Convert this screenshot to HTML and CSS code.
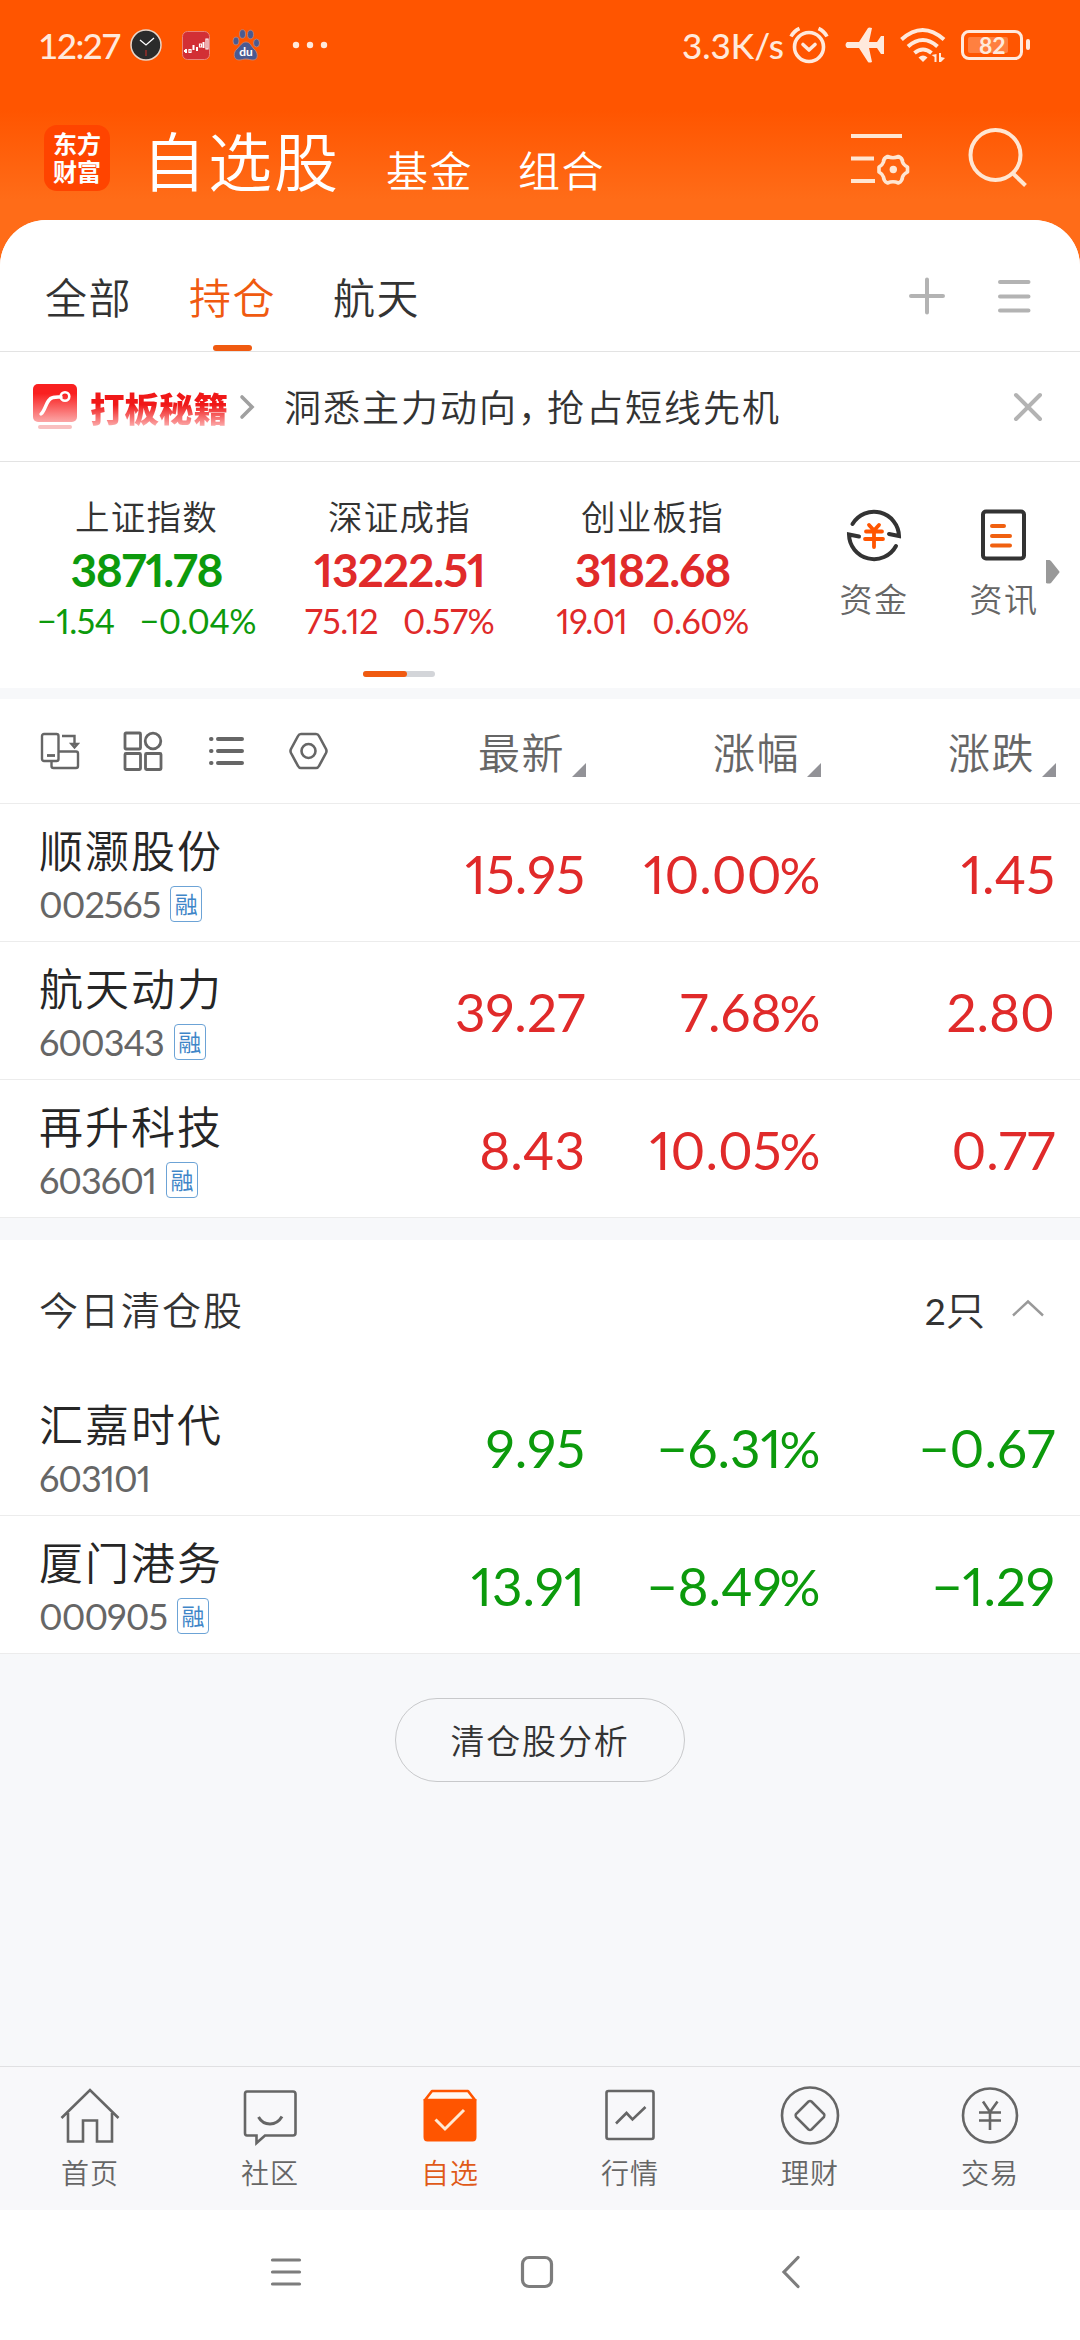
FILE: index.html
```html
<!DOCTYPE html>
<html lang="zh-CN">
<head>
    <meta charset="UTF-8">
    <meta name="viewport" content="width=device-width, initial-scale=1.0">
    <title>自选股</title>
    <link rel="stylesheet" href="styles.css">
</head>
<body>
    <header class="top">
        <div class="status-bar">
            <span class="clock">12:27</span>
            <svg class="st-watch" width="32" height="32" viewBox="0 0 32 32">
                <circle cx="16" cy="16" r="15" fill="#2b2b2b" stroke="#e8d5c8" stroke-width="1.5"/>
                <path d="M10 11l6 5 8-7" fill="none" stroke="#fff" stroke-width="1.3"/>
                <path d="M16 21v6" stroke="#b5302a" stroke-width="1.2"/>
            </svg>
            <svg class="st-stock" width="28" height="29" viewBox="0 0 28 29">
                <rect x=".5" y=".5" width="27" height="28" rx="5" fill="#d22f35" stroke="#e8837a"/>
                <path d="M2 20h3M4 18v4M11.500 14v5M15 16v4M21.500 11v6" stroke="#fff" stroke-width="2"/>
                <path d="M7 18.500h2v3H7zM17.500 13h2v3h-2zM24 8h2v10h-2z" fill="none" stroke="#fff" stroke-width="1.2"/>
            </svg>
            <svg class="st-paw" width="28" height="32" viewBox="0 0 28 32">
                <g fill="#4a5a92" stroke="#c08a80" stroke-width=".8">
                    <ellipse cx="4" cy="12" rx="3" ry="4"/>
                    <ellipse cx="10.500" cy="5" rx="3" ry="4.300"/>
                    <ellipse cx="18.500" cy="5.500" rx="3" ry="4.300"/>
                    <ellipse cx="24.500" cy="14" rx="3" ry="4"/>
                    <path d="M14 13c4 0 5 4 8 7 4 3 5 11-1 11-3 0-4-1-7-1s-4 1-7 1c-6 0-6-8-2-11 3-3 5-7 9-7z"/>
                </g>
                <text class="paw-text" x="14" y="27">du</text>
            </svg>
            <svg class="st-dots" width="36" height="8" viewBox="0 0 36 8" fill="#ffe9dc">
                <circle cx="4" cy="4" r="3.200"/><circle cx="18" cy="4" r="3.200"/><circle cx="32" cy="4" r="3.200"/>
            </svg>
            <span class="speed">3.3K/s</span>
            <svg class="st-alarm" width="40" height="38" viewBox="0 0 40 38" fill="none" stroke="#ffe9dc" stroke-width="3.600">
                <circle cx="20" cy="21" r="14.500"/>
                <path d="M14 18.500l6 5.500 6-5.500" stroke-linejoin="round" stroke-linecap="round"/>
                <path d="M2 10.500q3-5.500 8.500-8M38 10.500q-3-5.500-8.500-8"/>
            </svg>
            <svg class="st-plane" width="40" height="36" viewBox="0 0 40 36" fill="#ffe9dc">
                <path d="M3 15h12L24 1q1-1 4 0l-3 14h8l4-6h3v18h-3l-4-6h-8l3 14q-3 1-4 0L15 21H3q-3-3 0-6z"/>
            </svg>
            <svg class="st-wifi" width="46" height="36" viewBox="0 0 46 36" fill="none" stroke="#ffe9dc" stroke-width="4">
                <path d="M1.500 12.500q21-19 42.500 0M8 19.500q15-13 29.500 0M14.500 26q8.500-7 17 0"/>
                <path d="M23 35l-4.500-4.500q4.500-4 9 0z" fill="#ffe9dc" stroke="none"/>
                <path d="M31.500 28l5-1v8h-2v-5zM39 26h2v4l4 1-4 4h-2z" fill="#ffe9dc" stroke="none"/>
            </svg>
            <div class="battery"><span class="battery-level">82</span></div>
        </div>

        <nav class="title-bar">
            <div class="logo">东方<br>财富</div>
            <span class="title-main">自选股</span>
            <span class="title-sub">基金</span>
            <span class="title-sub">组合</span>
            <svg class="ic-manage" width="60" height="54" viewBox="0 0 60 54" fill="none" stroke="#ffe6d2" stroke-width="4.200">
                <path d="M0 4h51M0 26.500h23M0 49h24"/>
                <path d="M36.500 24.500q5.500 2.500 11 0 4 1.500 4 5.500 1 3 5 5v5q-4 2-5 5 0 4-4 6-5.500-2.500-11 0-4-2-4-6-1-3-4.500-5v-5q3.500-2 4.500-5 0-4 4-5.500z" stroke-width="3.600" stroke-linejoin="round"/>
                <circle cx="42.300" cy="37.500" r="3.700" fill="#ffe6d2" stroke="none"/>
            </svg>
            <svg class="ic-search" width="60" height="62" viewBox="0 0 60 62" fill="none" stroke="#ffe6d2" stroke-width="4">
                <circle cx="27.500" cy="28" r="25"/>
                <path d="M44.500 46l13 12.500"/>
            </svg>
        </nav>
    </header>

    <main class="content">
        <section class="tabs">
            <span class="tab">全部</span>
            <span class="tab active">持仓</span>
            <span class="tab">航天</span>
            <svg class="ic-plus" width="36" height="38" viewBox="0 0 36 38" fill="none" stroke="#b3b3b3" stroke-width="4" stroke-linecap="round">
                <path d="M2 19h32M18 2.500v33"/>
            </svg>
            <svg class="ic-menu" width="34" height="36" viewBox="0 0 34 36" fill="none" stroke="#b3b3b3" stroke-width="4" stroke-linecap="round">
                <path d="M3 4h28.500M3 18.500h28.500M3 32.500h28.500"/>
            </svg>
        </section>

        <section class="banner">
            <svg class="banner-icon" width="44" height="46" viewBox="0 0 44 46">
                <defs>
                    <linearGradient id="redFade" x1="0" y1="0" x2="0" y2="1">
                        <stop offset=".25" stop-color="#f92020"/>
                        <stop offset="1" stop-color="#fba7a7"/>
                    </linearGradient>
                </defs>
                <rect width="44" height="38" rx="5" fill="url(#redFade)"/>
                <path d="M8 30c5-4 5-15 12-16.500 3-.8 5-.5 8-.5" fill="none" stroke="#fff" stroke-width="3.400" stroke-linecap="round"/>
                <circle cx="32" cy="12.500" r="4.300" fill="none" stroke="#fff" stroke-width="2.600"/>
                <rect x="5" y="41" width="34" height="4" rx="2" fill="#f9c0c0"/>
            </svg>
            <span class="banner-title">打板秘籍</span>
            <svg class="banner-more" width="16" height="26" viewBox="0 0 16 26" fill="none" stroke="#a0a0a0" stroke-width="3.600" stroke-linecap="round">
                <path d="M3 3l10 10L3 23"/>
            </svg>
            <span class="banner-text">洞悉主力动向<span class="comma">，</span>抢占短线先机</span>
            <svg class="ic-close" width="30" height="30" viewBox="0 0 30 30" fill="none" stroke="#b3b3b3" stroke-width="4" stroke-linecap="round">
                <path d="M3 3l24 24M27 3L3 27"/>
            </svg>
        </section>

        <section class="indices">
            <div class="index down">
                <span class="index-name">上证指数</span>
                <span class="index-value">3871.78</span>
                <span class="index-change"><span>−1.54</span><span>−0.04%</span></span>
            </div>
            <div class="index up">
                <span class="index-name">深证成指</span>
                <span class="index-value">13222.51</span>
                <span class="index-change"><span>75.12</span><span>0.57%</span></span>
            </div>
            <div class="index up">
                <span class="index-name">创业板指</span>
                <span class="index-value">3182.68</span>
                <span class="index-change"><span>19.01</span><span>0.60%</span></span>
            </div>
            <div class="shortcut">
                <svg width="60" height="60" viewBox="0 0 60 60" fill="none" stroke="#333" stroke-width="4">
                    <path d="M8.500 19A25 25 0 0 1 55 31l-10-2" stroke-linecap="round"/>
                    <path d="M52 41A25 25 0 0 1 5 29.500l10 2" stroke-linecap="round"/>
                    <path d="M25 20l5 5.500 5-5.500M22 26.500h16M21 34h18M30 26v16" stroke="#ff5500" stroke-width="3.800" stroke-linecap="round"/>
                </svg>
                <span>资金</span>
            </div>
            <div class="shortcut news">
                <svg width="60" height="60" viewBox="0 0 60 60" fill="none" stroke="#333" stroke-width="4">
                    <rect x="9" y="6.500" width="41" height="47" rx="3"/>
                    <path d="M18 21h12M18 31h18M18 40.500h18" stroke="#f06010" stroke-width="4" stroke-linecap="round"/>
                </svg>
                <span>资讯</span>
            </div>
            <svg class="more-arrow" width="14" height="24" viewBox="0 0 14 24">
                <path d="M0 0q3-1 5 1l8 10q1 1 0 2l-8 10q-2 1-5 0z" fill="#999"/>
            </svg>
            <div class="pager"><div class="pager-on"></div></div>
        </section>

        <section class="stocks">
            <div class="stock-head">
                <div class="tools">
                    <svg width="40" height="40" viewBox="0 0 40 40" fill="none" stroke="#666" stroke-width="2.400">
                        <rect x="2" y="3" width="16.500" height="27" rx="2"/>
                        <path d="M7 24.500h8" stroke-width="2.800"/>
                        <path d="M22 5h12.500v9M31.500 13h6l-3 3.500z"/>
                        <path d="M18.500 20.500H36q2 0 2 2V35q0 2-2 2H13.500q-2 0-2-2v-5"/>
                    </svg>
                    <svg width="40" height="40" viewBox="0 0 40 40" fill="none" stroke="#666" stroke-width="2.800">
                        <rect x="2" y="2" width="15.500" height="16" rx="1"/>
                        <circle cx="30" cy="10" r="7.800"/>
                        <rect x="2" y="22.500" width="15.500" height="16" rx="1"/>
                        <rect x="22.500" y="22.500" width="15.500" height="16" rx="1"/>
                    </svg>
                    <svg width="40" height="40" viewBox="0 0 40 40" fill="none" stroke="#666" stroke-width="4" stroke-linecap="round">
                        <path d="M5 8h.5M12 8h24M5 20h.5M12 20h24M5 32h.5M12 32h24"/>
                    </svg>
                    <svg width="40" height="40" viewBox="0 0 40 40" fill="none" stroke="#666" stroke-width="2.600">
                        <path d="M12 3h15q2 0 3 2l7 13q1 2 0 4l-7 13q-1 2-3 2H12q-2 0-3-2L2 22q-1-2 0-4L9 5q1-2 3-2z"/>
                        <circle cx="19.500" cy="20" r="7"/>
                    </svg>
                </div>
                <span class="col col-price">最新</span>
                <span class="col col-rate">涨幅</span>
                <span class="col col-diff">涨跌</span>
            </div>

            <div class="stock up">
                <div class="stock-info">
                    <span class="stock-name">顺灏股份</span>
                    <span class="stock-code">002565<span class="badge">融</span></span>
                </div>
                <span class="num">15.95</span>
                <span class="num">10.00<span class="pct">%</span></span>
                <span class="num">1.45</span>
            </div>
            <div class="stock up">
                <div class="stock-info">
                    <span class="stock-name">航天动力</span>
                    <span class="stock-code">600343<span class="badge">融</span></span>
                </div>
                <span class="num">39.27</span>
                <span class="num">7.68<span class="pct">%</span></span>
                <span class="num">2.80</span>
            </div>
            <div class="stock up">
                <div class="stock-info">
                    <span class="stock-name">再升科技</span>
                    <span class="stock-code">603601<span class="badge">融</span></span>
                </div>
                <span class="num">8.43</span>
                <span class="num">10.05<span class="pct">%</span></span>
                <span class="num">0.77</span>
            </div>
        </section>

        <section class="cleared">
            <div class="cleared-head">
                <span>今日清仓股</span>
                <span class="cleared-count"><span class="digit">2</span>只</span>
                <svg width="34" height="20" viewBox="0 0 34 20" fill="none" stroke="#999" stroke-width="2.400">
                    <path d="M2 17.500l15-14 15 14"/>
                </svg>
            </div>
            <div class="stock down">
                <div class="stock-info">
                    <span class="stock-name">汇嘉时代</span>
                    <span class="stock-code">603101</span>
                </div>
                <span class="num">9.95</span>
                <span class="num">−6.31<span class="pct">%</span></span>
                <span class="num">−0.67</span>
            </div>
            <div class="stock down">
                <div class="stock-info">
                    <span class="stock-name">厦门港务</span>
                    <span class="stock-code">000905<span class="badge">融</span></span>
                </div>
                <span class="num">13.91</span>
                <span class="num">−8.49<span class="pct">%</span></span>
                <span class="num">−1.29</span>
            </div>
        </section>

        <div class="analysis">
            <button class="analysis-btn">清仓股分析</button>
        </div>
    </main>

    <nav class="bottom-bar">
        <a class="bottom-item">
            <svg width="64" height="64" viewBox="0 0 64 64" fill="none" stroke="#666" stroke-width="2.600">
                <path d="M3.500 35L32 7l28.500 28M10 30v28.500h15V37.500h14v21h15V30"/>
            </svg>
            <span>首页</span>
        </a>
        <a class="bottom-item">
            <svg width="64" height="64" viewBox="0 0 64 64" fill="none" stroke="#666" stroke-width="2.600">
                <path d="M9 8.500h46q2.500 0 2.500 2.500v39q0 2.500-2.500 2.500H27l-8.500 7.500v-7.500H9Q7 52.500 7 50V11q0-2.500 2-2.500z"/>
                <path d="M20.500 34q4 7 11.500 7t12-7.500" stroke-width="3"/>
            </svg>
            <span>社区</span>
        </a>
        <a class="bottom-item active">
            <svg width="64" height="64" viewBox="0 0 64 64" fill="none" stroke="#ff5500" stroke-width="2.600">
                <path d="M14 8h36l7 9H7z" fill="#fff8f2" stroke-linejoin="round"/>
                <path d="M5.500 16h53v38q0 4.500-4 4.500h-45q-4 0-4-4.500z" fill="#ff5500" stroke="none"/>
                <path d="M17.500 36.500l9.500 9.500 19-19" stroke="#ffe9d2" stroke-width="3"/>
            </svg>
            <span>自选</span>
        </a>
        <a class="bottom-item">
            <svg width="64" height="64" viewBox="0 0 64 64" fill="none" stroke="#666" stroke-width="2.600">
                <rect x="8.500" y="8" width="47" height="48" rx="2"/>
                <path d="M18 40.500l10.500-10.500 6 6.500L47.500 24"/>
            </svg>
            <span>行情</span>
        </a>
        <a class="bottom-item">
            <svg width="64" height="64" viewBox="0 0 64 64" fill="none" stroke="#666" stroke-width="2.600">
                <circle cx="32" cy="32.500" r="28"/>
                <path d="M30.500 18.500q1.500-1 3 0l12.500 12.500q1 1.500 0 3L33.500 46.500q-1.500 1-3 0L18 34q-1-1.500 0-3z"/>
            </svg>
            <span>理财</span>
        </a>
        <a class="bottom-item">
            <svg width="64" height="64" viewBox="0 0 64 64" fill="none" stroke="#666" stroke-width="2.600">
                <circle cx="32" cy="32.500" r="27"/>
                <path d="M25 18.500l7 10.500 7.500-10.500M21 29.500h22M21 37.500h22M32 29v18"/>
            </svg>
            <span>交易</span>
        </a>
    </nav>

    <footer class="system-nav">
        <svg width="34" height="34" viewBox="0 0 34 34" fill="none" stroke="#7d7d7d" stroke-width="3.200" stroke-linecap="round">
            <path d="M3.500 5h27M3.500 17h27M3.500 29h27"/>
        </svg>
        <svg width="34" height="34" viewBox="0 0 34 34" fill="none" stroke="#7d7d7d" stroke-width="3.200">
            <rect x="2.500" y="2.500" width="29" height="29" rx="6.500"/>
        </svg>
        <svg width="34" height="34" viewBox="0 0 34 34" fill="none" stroke="#7d7d7d" stroke-width="3.200" stroke-linecap="round">
            <path d="M27 2.500L13 17l14 14.500"/>
        </svg>
    </footer>
</body>
</html>
```

FILE: styles.css
```css
* {
    box-sizing: border-box;
}
body {
    margin: 0;
    width: 1080px;
    height: 2340px;
    display: flex;
    flex-direction: column;
    font-family: "Noto Sans CJK SC", sans-serif;
    font-weight: 350;
    color: #333;
    background: #f7f8fa;
    overflow: hidden;
}
svg {
    display: block;
    flex-shrink: 0;
}

/* header */
.top {
    height: 270px;
    margin-bottom: -50px;
    background: linear-gradient(#ff5500 110px, #ff6c18 200px, #ff6c18);
}
.status-bar {
    height: 90px;
    display: flex;
    align-items: center;
    padding-left: 38px;
    font-family: Lato, sans-serif;
    font-weight: 500;
    font-size: 35px;
    line-height: 40px;
    color: #ffe9dc;
}
.clock {
    width: 92px;
    letter-spacing: -1.6px;
}
.st-stock {
    margin-left: 20px;
}
.st-paw {
    margin-left: 22px;
}
.paw-text {
    font: bold 12px Lato, sans-serif;
    fill: #fff;
    text-anchor: middle;
}
.st-dots {
    margin-left: 32px;
}
.speed {
    margin-left: auto;
}
.st-alarm {
    margin-left: 5px;
}
.st-plane {
    margin-left: 15px;
}
.st-wifi {
    margin-left: 16px;
}
.battery {
    position: relative;
    width: 62px;
    height: 30px;
    margin: 0 57px 0 15px;
    padding: 4px;
    border: 3.5px solid #ffe9dc;
    border-radius: 8px;
}
.battery::after {
    content: "";
    position: absolute;
    right: -10px;
    top: 6px;
    width: 4px;
    height: 11px;
    border-radius: 2px;
    background: #ffe9dc;
}
.battery-level {
    display: block;
    width: 40px;
    height: 16px;
    padding-left: 11px;
    border-radius: 2px;
    background: #ff8040;
    font-size: 23px;
    font-weight: 700;
    line-height: 16px;
}
.title-bar {
    height: 130px;
    display: flex;
    align-items: flex-start;
    padding-left: 44px;
    color: #fff;
}
.logo {
    width: 66px;
    height: 66px;
    margin-top: 35px;
    padding-top: 4px;
    border-radius: 13px;
    background: #ff4400;
    font-size: 24px;
    font-weight: 700;
    line-height: 28px;
    text-align: center;
}
.title-main {
    margin: 28px 0 0 32px;
    width: 244px;
    font-size: 64px;
    line-height: 80px;
    letter-spacing: 2px;
}
.title-sub {
    margin-top: 49px;
    width: 132px;
    font-size: 42px;
    line-height: 60px;
    letter-spacing: 1.5px;
}
.ic-manage {
    margin: 42px 0 0 auto;
}
.ic-search {
    margin: 37px 52px 0 57px;
}

/* group tabs */
.content {
    flex: 1;
    border-radius: 46px 46px 0 0;
    background: #f7f8fa;
    overflow: hidden;
}
.tabs {
    height: 132px;
    display: flex;
    align-items: flex-start;
    padding: 46px 49px 0 45px;
    border-bottom: 1px solid #e3e3e3;
    background: #fff;
}
.tab {
    position: relative;
    width: 84px;
    height: 60px;
    margin-right: 60px;
    font-size: 42px;
    line-height: 60px;
    letter-spacing: 1.5px;
    white-space: nowrap;
}
.tab.active {
    color: #f05a10;
}
.tab.active::after {
    content: "";
    position: absolute;
    left: 24px;
    top: 79px;
    width: 39px;
    height: 6px;
    border-radius: 3px;
    background: #f05a10;
}
.ic-plus {
    margin: 11px 52px 0 auto;
}
.ic-menu {
    margin-top: 12px;
}

/* promo */
.banner {
    height: 110px;
    display: flex;
    align-items: center;
    padding: 0 37px 0 33px;
    border-bottom: 1px solid #e3e3e3;
    background: #fff;
}
.banner-title {
    margin-left: 13px;
    width: 139px;
    font-size: 34.5px;
    font-weight: 900;
    line-height: 44px;
    background: linear-gradient(#f01818 45%, #fba0a0 90%);
    -webkit-background-clip: text;
    background-clip: text;
    color: transparent;
}
.banner-more {
    margin-left: 10px;
}
.banner-text {
    margin: -1px 0 0 29px;
    font-size: 37px;
    line-height: 50px;
    letter-spacing: 2px;
}
.comma {
    letter-spacing: -8px;
}
.ic-close {
    margin-left: auto;
}

/* index cards */
.indices {
    position: relative;
    height: 226px;
    display: flex;
    padding: 29px 0 0 20px;
    background: #fff;
}
.index {
    width: 253px;
    display: flex;
    flex-direction: column;
    align-items: center;
}
.index-name {
    font-size: 34.5px;
    line-height: 48px;
    letter-spacing: 1.3px;
    color: #333;
}
.index-value {
    margin-top: 4px;
    font-family: Lato, sans-serif;
    font-weight: 700;
    font-size: 46px;
    line-height: 54px;
    letter-spacing: -1.1px;
    font-feature-settings: "pnum";
}
.index-change {
    display: flex;
    gap: 25px;
    margin-top: 4px;
    font-family: Lato, sans-serif;
    font-weight: 400;
    font-size: 34px;
    line-height: 40px;
    letter-spacing: -.5px;
    font-feature-settings: "pnum";
}
.up {
    color: #e02a2a;
}
.down {
    color: #0c9a0c;
}
.shortcut {
    width: 80px;
    margin-left: 55px;
    padding-top: 14px;
    display: flex;
    flex-direction: column;
    align-items: center;
    font-size: 33px;
    line-height: 48px;
    letter-spacing: 1.5px;
    color: #666;
}
.shortcut span {
    margin-top: 9px;
}
.shortcut.news {
    margin-left: 50px;
}
.more-arrow {
    margin: 69px 0 0 2px;
}
.pager {
    position: absolute;
    left: 363px;
    bottom: 11px;
    width: 72px;
    height: 6px;
    border-radius: 3px;
    background: #d3d5d9;
}
.pager-on {
    width: 44px;
    height: 6px;
    border-radius: 3px;
    background: #f05a10;
}

/* stock list */
.stocks {
    margin-top: 11px;
    background: #fff;
}
.stock-head,
.stock {
    display: grid;
    grid-template-columns: 350px 235px 235px 235px;
    border-bottom: 1px solid #ececec;
}
.stock-head {
    height: 105px;
    align-items: start;
    color: #666;
}
.tools {
    display: flex;
    gap: 43px;
    padding: 32px 0 0 40px;
}
.col {
    position: relative;
    margin-top: 22px;
    padding-right: 20px;
    text-align: right;
    font-size: 42px;
    line-height: 60px;
    letter-spacing: 1.5px;
}
.col::after {
    content: "";
    position: absolute;
    right: -1px;
    top: 42px;
    border-left: 14px solid transparent;
    border-bottom: 14px solid #929297;
}
.stock {
    height: 138px;
}
.stock-info {
    padding: 15px 0 0 39px;
}
.stock-name {
    display: block;
    font-size: 44px;
    line-height: 60px;
    letter-spacing: 2px;
    color: #262626;
}
.stock-code {
    display: flex;
    align-items: center;
    height: 50px;
    font-family: Lato, sans-serif;
    font-weight: 400;
    font-size: 36px;
    letter-spacing: -1px;
    font-feature-settings: "pnum";
    color: #666;
}
.badge {
    width: 32px;
    height: 36px;
    margin-left: 10px;
    border: 1.500px solid #6ca3d6;
    border-radius: 4px;
    font-family: "Noto Sans CJK SC", sans-serif;
    font-size: 23px;
    letter-spacing: 0;
    line-height: 33px;
    text-align: center;
    color: #3f86c8;
}
.num {
    font-family: Lato, sans-serif;
    font-weight: 400;
    font-size: 53px;
    line-height: 139px;
    text-align: right;
    font-feature-settings: "pnum";
    font-kerning: none;
}
.pct {
    margin-left: -2px;
    font-size: 51px;
    letter-spacing: -.5px;
}

/* cleared today */
.cleared {
    margin-top: 22px;
    background: #fff;
}
.cleared-head {
    height: 138px;
    display: flex;
    align-items: center;
    padding: 0 35px 2px 39px;
    font-size: 39px;
    letter-spacing: 2px;
}
.cleared-count {
    margin: 0 24px 0 auto;
}
.digit {
    font-family: Lato, sans-serif;
    font-weight: 400;
    font-size: 37px;
    letter-spacing: 0;
}
.analysis {
    display: flex;
    justify-content: center;
    padding-top: 44px;
}
.analysis-btn {
    width: 290px;
    height: 84px;
    padding: 0 0 2px;
    border: 1.500px solid #c8c9cb;
    border-radius: 42px;
    background: transparent;
    font-family: inherit;
    font-weight: 350;
    font-size: 34px;
    letter-spacing: 1.8px;
    color: #333;
}

/* bottom tabs */
.bottom-bar {
    height: 144px;
    display: flex;
    border-top: 1px solid #e0e0e2;
    background: #f8f8fa;
}
.bottom-item {
    flex: 1;
    display: flex;
    flex-direction: column;
    align-items: center;
    padding-top: 16px;
    font-size: 28px;
    line-height: 40px;
    letter-spacing: 1px;
    color: #666;
}
.bottom-item span {
    margin-top: 5px;
}
.bottom-item.active {
    color: #e05a18;
}
.system-nav {
    height: 130px;
    display: flex;
    padding: 45px 0 0 269px;
    gap: 217px;
    background: #fff;
}
```
